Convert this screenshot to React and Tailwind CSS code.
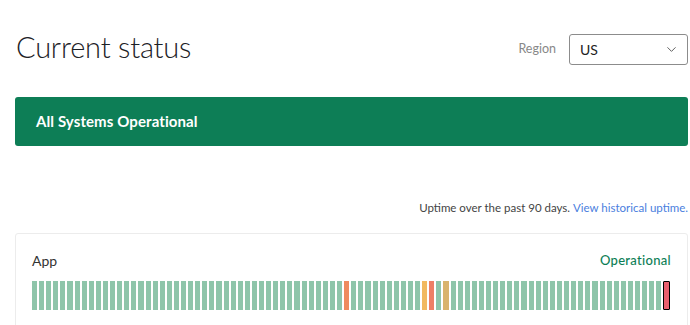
import { ChevronDown } from 'lucide-react';

const special = { 44: 'bg-[#ef8a5e]', 55: 'bg-[#f2b960]', 56: 'bg-[#ee7f66]', 58: 'bg-[#d9b36c]' };

export default function App() {
    const days = Array.from({ length: 90 }, (_, i) => i);

    return (
        <div className="w-[690px] h-[325px] overflow-hidden bg-white font-['Lato',sans-serif] text-[#333]">
            <div className="ml-[15px] w-[673px]">
                <div className="flex justify-between pt-[34px] h-[97px] items-start">
                    <h1 className="text-[29px] font-light leading-none tracking-[-0.2px] text-[#1c2126] -mt-[2px] ml-[1px]">Current status</h1>
                    <div className="flex items-center gap-[13px]">
                        <span className="text-[12.5px] text-[#888]">Region</span>
                        <div className="w-[119px] h-[31px] border border-[#8c8c8c] rounded-[3px] flex items-center justify-between pl-[10px] pr-[8px]">
                            <span className="text-[14px] text-[#222]">US</span>
                            <ChevronDown className="w-[15px] h-[15px] text-[#555]" strokeWidth={1.5} />
                        </div>
                    </div>
                </div>

                <div className="h-[49px] bg-[#0d7e56] rounded-[3px] flex items-center px-[21px]">
                    <span className="text-white font-bold text-[15px] tracking-[0.1px]">All Systems Operational</span>
                </div>

                <div className="flex justify-end mt-[53px] text-[11.5px]">
                    <span className="text-[#444]">Uptime over the past 90 days.&nbsp;</span>
                    <a className="text-[#4a7ede]">View historical uptime.</a>
                </div>

                <div className="mt-[17px] border border-[#ececec] rounded-[3px] px-[16px] pt-[16px] pb-[20px]">
                    <div className="flex items-center justify-between">
                        <span className="text-[14px] text-[#333]">App</span>
                        <span className="text-[13px] font-medium text-[#0d7e56] tracking-[0.3px]">Operational</span>
                    </div>
                    <div className="flex gap-[2px] h-[29px] mt-[10px]">
                        {days.map((i) =>
                            i === 89 ? (
                                <div key={i} className="flex-1 bg-[#e8606e] border-[1.5px] border-black rounded-[1px]" />
                            ) : (
                                <div key={i} className={`flex-1 ${special[i] || 'bg-[#8ec5aa]'}`} />
                            )
                        )}
                    </div>
                </div>
            </div>
        </div>
    );
}
